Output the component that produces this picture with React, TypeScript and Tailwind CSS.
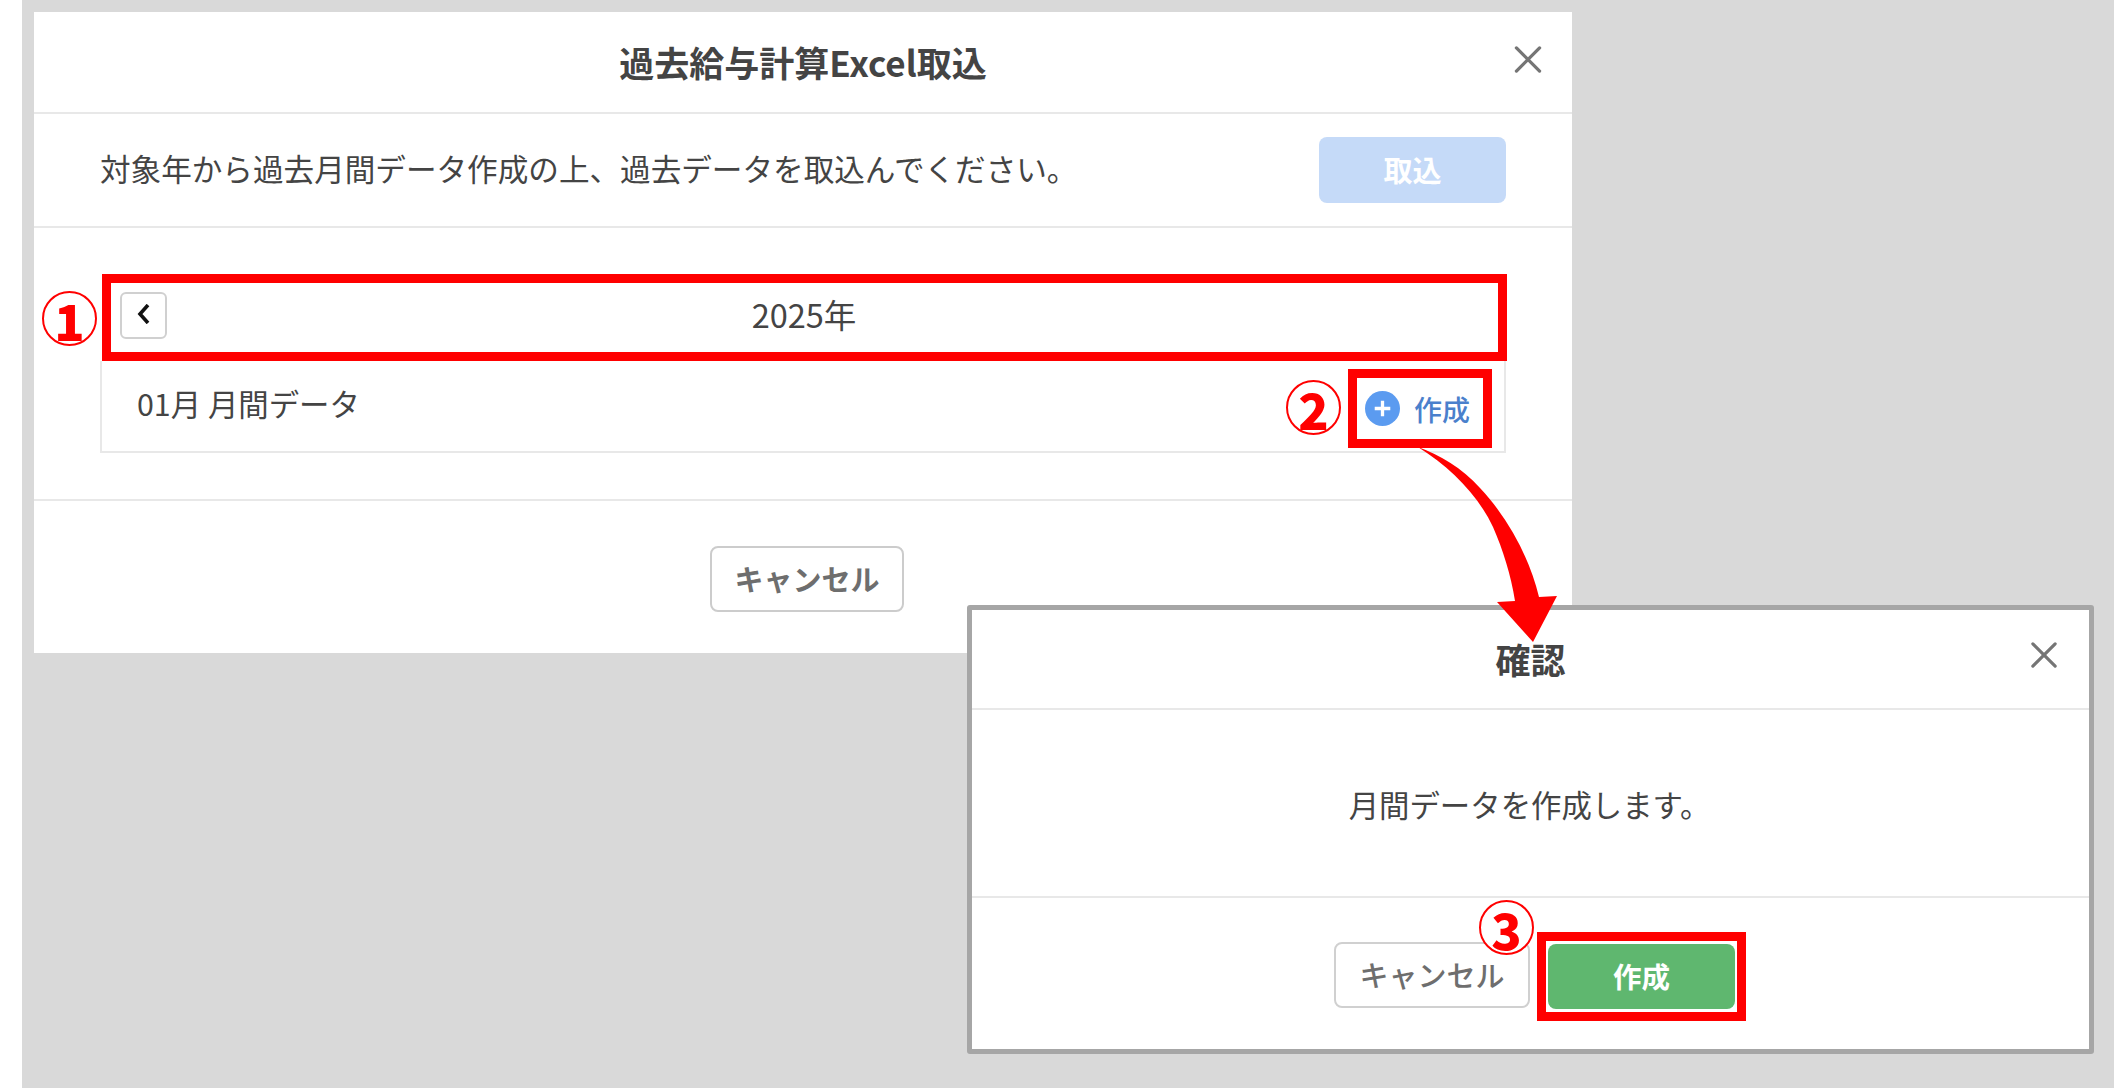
const FONT = "font-['Noto_Sans_CJK_JP','Noto_Sans',sans-serif]";

function CloseIcon({ className }: { className: string }) {
  return (
    <svg viewBox="0 0 28 28" className={className} fill="none" stroke="#757575" strokeWidth="3.4" strokeLinecap="round">
      <line x1="2" y1="2" x2="26" y2="26" />
      <line x1="26" y1="2" x2="2" y2="26" />
    </svg>
  );
}

function Mark({ n, className }: { n: string; className: string }) {
  return (
    <div
      className={`absolute flex h-[55px] w-[55px] items-center justify-center rounded-full border-2 border-[#ff0000] bg-white text-[50px] leading-none font-bold text-[#ff0000] ${className}`}
    >
      <span className="font-['Noto_Sans_CJK_JP',sans-serif] font-black">{n}</span>
    </div>
  );
}

export default function App() {
  return (
    <div className={`relative flex h-[1088px] w-[2114px] overflow-hidden bg-white text-[#444] ${FONT}`}>
      <div className="w-[22px] shrink-0 bg-white" />
      <main className="flex-1 bg-[#d9d9d9] pl-3 pt-3">
        {/* Import dialog */}
        <section className="flex w-[1538px] flex-col bg-white">
          <header className="relative flex h-[102px] items-center justify-center border-b-2 border-[#e8e8e8] pb-[2px]">
            <h1 className="text-[35px] leading-none font-bold text-[#444]">過去給与計算Excel取込</h1>
            <CloseIcon className="absolute right-[30px] top-[34px] h-[27px] w-[28px]" />
          </header>

          <div className="flex h-[114px] items-center justify-between border-b-2 border-[#e8e8e8] pl-[66px] pr-[66px] pb-[4px]">
            <p className="text-[30.6px] leading-none">対象年から過去月間データ作成の上、過去データを取込んでください。</p>
            <button className="mt-[4px] flex h-[66px] w-[187px] items-center justify-center rounded-lg bg-[#c5daf8] text-[29px] font-bold text-white">
              取込
            </button>
          </div>

          <div className="h-[273px] border-b-2 border-[#e8e8e8] pl-[66px] pr-[65px] pt-[46px]">
            <div className="ml-[2px] flex h-[87px] items-start border-[9px] border-[#ff0000] pl-[9px] pt-[9px]">
              <button className="flex h-[47px] w-[47px] items-center justify-center rounded-[6px] border-2 border-[#d0d0d0] bg-white pb-[3px]">
                <svg viewBox="0 0 14 20" className="h-[20px] w-[14px]" fill="none" stroke="#111" strokeWidth="3.6">
                  <path d="M11 1 L3 10 L11 19" />
                </svg>
              </button>
              <div className="flex-1 pr-[57px] pt-[1px] text-center text-[32.5px] leading-[42px]">2025年</div>
            </div>
            <div className="mr-[1px] flex h-[92px] items-start justify-between border-x-2 border-b-2 border-[#e8e8e8] pl-[35px] pr-[12px] pt-[8px]">
              <span className="mt-[13px] text-[30.4px] leading-[42px]">01月 月間データ</span>
              <div className="flex h-[79px] w-[144px] items-center border-[9px] border-[#ff0000] pl-[8px]">
                <svg viewBox="0 0 36 36" className="h-[35px] w-[35px] shrink-0">
                  <circle cx="18" cy="18" r="18" fill="#5b9bf0" />
                  <path d="M18 10 V26 M10 18 H26" stroke="#fff" strokeWidth="3.4" />
                </svg>
                <span className="ml-[14px] text-[28px] leading-none font-medium text-[#4a80cc]">作成</span>
              </div>
            </div>
          </div>

          <div className="flex h-[152px] items-start justify-center pt-[45px]">
            <button className="ml-[8px] flex h-[66px] w-[194px] items-center justify-center rounded-lg border-2 border-[#cccccc] bg-white text-[29px] font-bold text-[#6e6e6e]">
              キャンセル
            </button>
          </div>
        </section>
      </main>

      {/* Confirmation dialog, pasted over the first one */}
      <section className="absolute left-[967px] top-[605px] flex h-[449px] w-[1127px] flex-col rounded-[3px] border-[5px] border-[#a6a6a6] bg-white">
        <header className="relative flex h-[100px] items-center justify-center border-b-2 border-[#e8e8e8] pb-[2px]">
          <h2 className="text-[35px] leading-none font-bold text-[#444]">確認</h2>
          <CloseIcon className="absolute right-[32px] top-[32px] h-[26px] w-[26px]" />
        </header>
        <div className="flex h-[188px] items-center justify-center border-b-2 border-[#e8e8e8] pr-[2px] pt-[2px]">
          <p className="text-[30.4px] leading-none">月間データを作成します。</p>
        </div>
        <div className="flex flex-1 items-start pl-[362px] pt-[44px]">
          <button className="flex h-[66px] w-[196px] items-center justify-center rounded-lg border-2 border-[#d0d0d0] bg-white text-[29px] font-medium text-[#6e6e6e]">
            キャンセル
          </button>
          <div className="-mt-[10px] ml-[7px] flex h-[89px] w-[209px] shrink-0 items-center justify-center border-[9px] border-[#ff0000] bg-white">
            <button className="flex h-[65px] w-[187px] items-center justify-center rounded-lg bg-[#5fb76f] text-[28.5px] font-bold text-white">
              作成
            </button>
          </div>
        </div>
      </section>

      {/* Annotations */}
      <Mark n="1" className="left-[42px] top-[291px]" />
      <Mark n="2" className="left-[1286px] top-[380px]" />
      <Mark n="3" className="left-[1479px] top-[900px]" />

      <svg className="pointer-events-none absolute left-0 top-0 h-[1088px] w-[2114px]" viewBox="0 0 2114 1088">
        <path
          d="M1418 447 C1440 455 1462 468 1480 488 C1510 520 1530 560 1539 597 L1557 596 L1533 642 L1497 602 L1515 601 C1511 575 1503 550 1493 527 C1478 495 1450 467 1418 447 Z"
          fill="#ff0000"
        />
      </svg>
    </div>
  );
}
